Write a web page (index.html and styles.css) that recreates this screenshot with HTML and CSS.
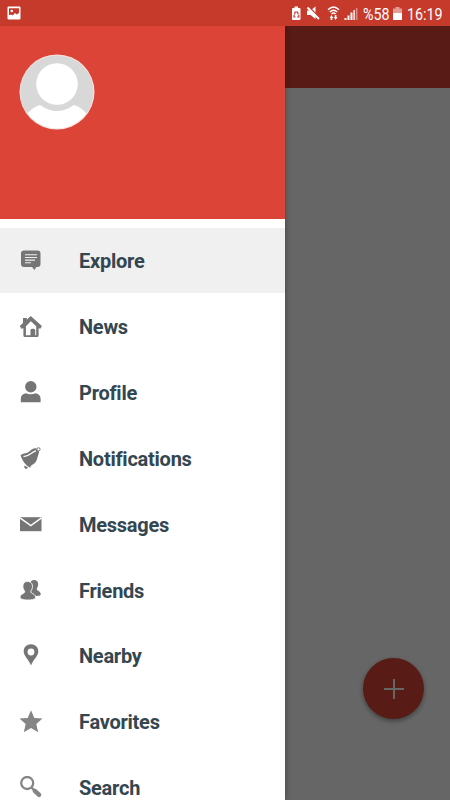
FILE: index.html
```
<!DOCTYPE html>
<html lang="en">
<head>
  <meta charset="UTF-8" />
  <title>Explore</title>
  <link rel="stylesheet" href="styles.css">
</head>
<body>
  <div class="status-bar">
    <svg class="status-picture" width="14" height="14" viewBox="0 0 14 14">
      <path fill-rule="evenodd" d="M1.500.5h11q1 0 1 1v11q0 1-1 1h-11q-1 0-1-1v-11q0-1 1-1zM2 2.200v7L4 8.500l1.500 1L8 7l1.500 1.500L12 7V2.200z" fill="#fff" />
      <circle cx="4.800" cy="5" r="1.300" fill="#fff" />
    </svg>
    <!-- battery saver, muted, wifi, signal -->
    <svg class="status-icons" width="68" height="16" viewBox="0 0 68 16">
      <path d="M3.500 1.500h3.500v1.500h1.500q1 0 1 1v10q0 1-1 1h-6.500q-1 0-1-1v-10q0-1 1-1h1.500z" fill="#fff" />
      <path d="M3.500 9.500L4.100 7h2.400l.8 2.500M3 10v2h1.500M7.800 10v2H6.200" fill="none" stroke="#c63a2c" stroke-width="1.200" />
      <path d="M16 5.500h3.500l5-4v12.500l-5-4H16z" fill="#fff" />
      <path d="M17.500 1.500L29 13" stroke="#c63a2c" stroke-width="1.600" />
      <path d="M16.500 2.500L28 14" stroke="#fff" stroke-width="1.800" />
      <path d="M37 4.800q5.500-5.500 11 0M38.800 7q3.700-3.600 7.400 0M40.500 9q2-1.800 4 0" fill="none" stroke="#fff" stroke-width="1.400" />
      <path d="M38.700 13l1.800-3 1.800 3h-1v2h-1.600v-2zM42.800 12h1v-2h1.600v2h1L44.600 15z" fill="#fff" />
      <path d="M53.500 13h2v2h-2zM56.500 10.500h2V15h-2zM59.500 7.500h2V15h-2z" fill="#fff" />
      <path d="M62.300 5h1.700v10h-1.700z" fill="#fff" opacity=".8" />
      <path d="M64.800 3h1.700v12h-1.700z" fill="#fff" opacity=".4" />
    </svg>
    <span class="status-text battery-text">%58</span>
    <svg class="battery" width="9" height="14" viewBox="0 0 9 14">
      <path d="M2.500 0h4v1.500H9V6H0V1.500h2.500z" fill="#fff" opacity=".5" />
      <path d="M0 6h9v7H0z" fill="#fff" />
    </svg>
    <span class="status-text clock">16:19</span>
  </div>

  <div class="screen">
    <div class="toolbar"></div>
    <button class="fab">
      <svg width="22" height="22" viewBox="0 0 22 22">
        <path d="M11 1v20M1 11h20" stroke="#fff" stroke-width="2" />
      </svg>
    </button>
    <div class="scrim"></div>

    <div class="drawer">
      <div class="drawer-header">
        <svg class="avatar" width="76" height="76" viewBox="0 0 76 76">
          <clipPath id="round"><circle cx="38" cy="38" r="36.500" /></clipPath>
          <circle cx="38" cy="38" r="37.500" fill="#fbe3de" />
          <circle cx="38" cy="38" r="36.500" fill="#d8d8d8" />
          <g clip-path="url(#round)">
            <path d="M9 59q5-6 12-8 17 12 34 0 7 2 12 8v17H9z" fill="#fff" />
          </g>
          <circle cx="38" cy="30" r="20.800" fill="#fff" />
        </svg>
      </div>

      <ul class="menu">
        <li class="menu-item selected">
          <svg class="icon" viewBox="0 0 24 24">
            <path fill-rule="evenodd" d="M5 1.500h13.500q3 0 3 3v10.500q0 3-3 3h-1.200L15.500 21 13 18H5q-3 0-3-3V4.500q0-3 3-3zM6 5.200v1.100h12V5.200zM6 7.900V9h12V7.900zM6 10.600v1.100h10v-1.100zM6 13.200v1.100h6v-1.100z" />
          </svg>
          <span>Explore</span>
        </li>
        <li class="menu-item">
          <svg class="icon" viewBox="0 0 24 24">
            <path d="M.8 11L4 8V3h3.800v1.700L11.700 1 22.900 11 21.300 13.800l-1.700-.6v7.200q0 1.500-1.500 1.500H6q-1.600 0-1.600-1.500v-7.200l-2 .6z" />
            <path d="M11.900 6.300l5.300 5v9H6.900v-9z" fill="#fff" />
            <path d="M11.500 15.300q0-1.500 1.400-1.500h1.800q1.500 0 1.500 1.500V21h-4.700z" />
          </svg>
          <span>News</span>
        </li>
        <li class="menu-item">
          <svg class="icon" viewBox="0 0 24 24">
            <circle cx="11.800" cy="5.700" r="5.700" />
            <path d="M1.800 21.200v-3.500q0-4.500 5-5.500 4.700 2.300 9.800 0 5 1 5 5.500v3.500z" />
          </svg>
          <span>Profile</span>
        </li>
        <li class="menu-item">
          <svg class="icon" viewBox="0 0 24 24">
            <path d="M1.500 8.500C3 6 7 7.200 10 4.800 13 2 15.500.3 18 1.800q3 1.500 1.500 5.500c-1.500 4-1 5-3 8-2 2.500-4.500 2-5.300 5.500Q5 18 1.500 8.500z" />
            <path d="M4.500 9.600c4.500-.5 5.500-1.200 8-3.300 2-1.800 3-2.300 4.500-2.500" fill="none" stroke="#fff" stroke-width="1.200" />
            <circle cx="19.500" cy="2.300" r="1.600" fill="#fff" stroke="#757575" stroke-width="1" />
            <path d="M5.600 18.600l3.400 2q-1.400 2-3.100.8-1.200-1-.3-2.800z" />
          </svg>
          <span>Notifications</span>
        </li>
        <li class="menu-item">
          <svg class="icon" viewBox="0 0 24 24">
            <path d="M1 4.200h21.500v14H1z" />
            <path d="M1 4.900l10.800 7.600 10.700-7.600" fill="none" stroke="#fff" stroke-width="1.500" />
          </svg>
          <span>Messages</span>
        </li>
        <li class="menu-item">
          <svg class="icon" viewBox="0 0 24 24">
            <path d="M15 1c3.300 0 4.500 2.500 4.100 5.200-.3 2-1.300 2.800-1.300 4 .2 1.800 4 1.500 4 5.500-1.500 1.300-4 1.500-7 .8-2-1.500-3-2-2.800-4L11.300 3.500C12 2 13 1 15 1z" />
            <path stroke="#fff" stroke-width=".9" d="M8.500 2.500c3.700 0 5.300 2.500 4.900 6-.2 2-1.500 3-1.600 4.200.1 2.400 4.900 1.700 4.900 6.200-2 2.900-13.700 2.900-15.700 0-.1-4.500 4.600-3.800 4.700-6.200-.1-1.200-1.500-2.200-1.700-4.200C3.600 5 5 2.500 8.500 2.500z" />
          </svg>
          <span>Friends</span>
        </li>
        <li class="menu-item">
          <svg class="icon" viewBox="0 0 24 24">
            <path fill-rule="evenodd" d="M12 .3c4.300 0 7.300 3 7.300 7.300 0 4.500-5 8-7.300 14C9.700 15.600 4.700 12.100 4.700 7.600 4.700 3.300 7.700.3 12 .3zM12 4.600a3.400 3.400 0 1 0 0 6.800A3.400 3.400 0 1 0 12 4.600z" />
          </svg>
          <span>Nearby</span>
        </li>
        <li class="menu-item">
          <svg class="icon light" viewBox="0 0 24 24">
            <path d="M12 .3l3.300 7.700 8.200.6-6.200 5.400 1.900 8.200-7.200-4.200-7.200 4.200 1.900-8.200L.5 8.600l8.200-.6z" />
          </svg>
          <span>Favorites</span>
        </li>
        <li class="menu-item">
          <svg class="icon light" viewBox="0 0 24 24">
            <circle cx="8.200" cy="7" r="6" fill="none" stroke="#858585" stroke-width="2.300" />
            <path d="M12 11l3 3" stroke="#858585" stroke-width="2.200" />
            <path d="M15.800 14.800l4.300 4" stroke="#858585" stroke-width="4.500" stroke-linecap="round" />
          </svg>
          <span>Search</span>
        </li>
      </ul>
    </div>
  </div>
</body>
</html>
```

FILE: styles.css
```
* {
  box-sizing: border-box;
}

body {
  margin: 0;
  height: 800px;
  display: flex;
  flex-direction: column;
  overflow: hidden;
  font-family: Roboto, "Liberation Sans", sans-serif;
  background-color: #fff;
}

.status-bar {
  display: flex;
  align-items: center;
  flex: none;
  height: 26px;
  padding: 0 8px 0 7px;
  background-color: #c63a2c;
  color: #fff;
}

.status-icons {
  margin-left: auto;
  margin-right: 4px;
}

.status-text {
  font-size: 16px;
  line-height: 26px;
  padding-top: 3px;
  transform: scaleX(0.89);
  transform-origin: left;
}

.battery-text {
  width: 26px;
}

.clock {
  width: 35px;
}

.battery {
  margin: 2px 5px 0 4px;
}

.screen {
  position: relative;
  flex: 1;
  overflow: hidden;
}

.toolbar {
  height: 61.5px;
  background-color: #db4437;
}

.fab {
  position: absolute;
  right: 26px;
  bottom: 81px;
  width: 61px;
  height: 61px;
  display: flex;
  align-items: center;
  justify-content: center;
  padding: 0;
  border: none;
  border-radius: 50%;
  background-color: #db4437;
  box-shadow: 0 2px 5px rgba(0, 0, 0, 0.4);
}

.scrim {
  position: absolute;
  inset: 0;
  background-color: rgba(0, 0, 0, 0.6);
}

.drawer {
  position: absolute;
  top: 0;
  left: 0;
  bottom: 0;
  width: 285px;
  overflow: hidden;
  background-color: #fff;
  box-shadow: 0 0 6px rgba(0, 0, 0, 0.35);
}

.drawer-header {
  height: 193px;
  padding: 28px 19px;
  background-color: #db4437;
}

.avatar {
  display: block;
}

.menu {
  list-style: none;
  margin: 0;
  padding: 8.5px 0 0;
}

.menu-item {
  display: flex;
  align-items: center;
  gap: 36px;
  height: 65.85px;
  padding: 2px 0 0 19px;
  font-size: 20px;
  font-weight: 700;
  letter-spacing: -0.25px;
  color: #34464f;
}

.menu-item.selected {
  background-color: #f0f0f0;
}

.icon {
  width: 24px;
  height: 24px;
  fill: #757575;
}

.icon.light {
  fill: #858585;
}
```
